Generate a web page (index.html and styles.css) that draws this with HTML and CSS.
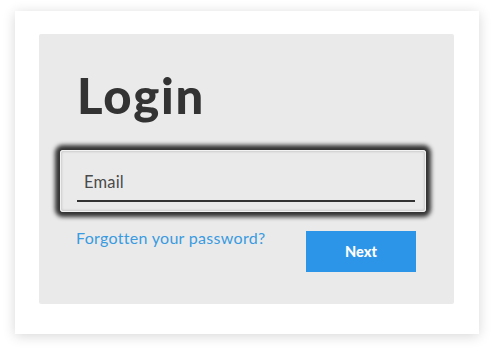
FILE: index.html
```html
<!DOCTYPE html>
<html>
<head>
<meta charset="utf-8">
<link rel="stylesheet" href="styles.css">
</head>
<body>
<div class="card">
  <div class="panel">
    <h1 class="title">Login</h1>
    <div class="field-ring">
      <div class="field">
        <span class="field-label">Email</span>
      </div>
    </div>
    <div class="actions">
      <a class="forgot" href="#">Forgotten your password?</a>
      <button class="next">Next</button>
    </div>
  </div>
</div>
</body>
</html>
```
FILE: styles.css
```css
html, body {
  margin: 0;
  padding: 0;
  background: #ffffff;
}
body {
  width: 494px;
  height: 354px;
  padding: 11px 15px 0 15px;
  box-sizing: border-box;
  font-family: Lato, "Noto Sans", sans-serif;
}
.card {
  width: 464px;
  height: 323px;
  box-sizing: border-box;
  background: #ffffff;
  padding: 23px 25px 30px 24px;
  box-shadow: 0 2px 12px rgba(0, 0, 0, 0.16);
}
.panel {
  height: 100%;
  background: #eaeaea;
  border-radius: 2px;
  padding: 0 38px 0 37px;
  box-sizing: border-box;
  display: flex;
  flex-direction: column;
}
.title {
  margin: 36px 0 0 1px;
  font-size: 49px;
  line-height: 50px;
  font-weight: 900;
  color: #333333;
  letter-spacing: 1.8px;
}
.field-ring {
  margin: 30px -10px 0 -16px;
  height: 62px;
  box-sizing: border-box;
  border-radius: 3px;
  border: 1px solid #f3f3f3;
  box-shadow: 0 0 4px 5px #333333, inset 0 0 3px rgba(0, 0, 0, 0.25);
  padding: 0 10px 0 16px;
  display: flex;
  flex-direction: column;
  justify-content: flex-end;
}
.field {
  border-bottom: 2px solid #333333;
  height: 30px;
  margin-bottom: 9px;
  box-sizing: border-box;
  padding-left: 7px;
}
.field-label {
  font-size: 16.5px;
  line-height: 20px;
  color: #4a4a4a;
  font-weight: 400;
  letter-spacing: 0.2px;
}
.actions {
  margin-top: 17px;
  display: flex;
  justify-content: space-between;
  align-items: flex-start;
}
.forgot {
  font-size: 16px;
  line-height: 18px;
  color: #3a9be0;
  text-decoration: none;
  margin-top: 0px;
  letter-spacing: 0.3px;
}
.next {
  width: 110px;
  height: 41px;
  border: none;
  background: #2d95e8;
  color: #ffffff;
  font-family: Lato, "Noto Sans", sans-serif;
  font-size: 14.5px;
  font-weight: 900;
  padding: 0;
  cursor: pointer;
  margin-top: 2px;
}
```
